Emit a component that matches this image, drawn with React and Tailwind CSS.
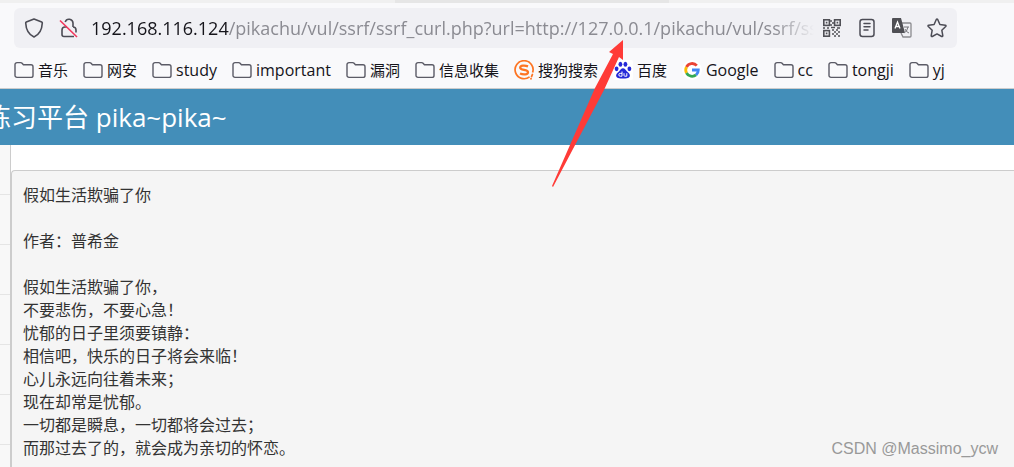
import React from 'react';

const FolderIcon = () => (
  <svg className="h-5 w-5 shrink-0" viewBox="0 0 20 20" fill="none" stroke="#5b5b66" strokeWidth="1.4" strokeLinejoin="round">
    <path d="M1 4.6a2 2 0 0 1 2-2h3.6a2 2 0 0 1 1.5.7l1.3 1.5H17a2 2 0 0 1 2 2v8.6a2 2 0 0 1-2 2H3a2 2 0 0 1-2-2z" />
  </svg>
);

const SogouIcon = () => (
  <svg className="h-5 w-5 shrink-0" viewBox="0 0 20 20" fill="none" stroke="#fd7422">
    <path d="M15.6 16.8A9 9 0 1 1 18.6 12.6" strokeWidth="1.7" />
    <path d="M14 6.4C11 5.2 6.200 5.200 6.200 7.800c0 2.700 7.800 1.500 7.800 4.400 0 2.600-5 2.600-8 1.300" strokeWidth="2.300" />
    <path d="M18.400 14.500l-.8 2M17 18.600v.2" strokeWidth="1.800" strokeLinecap="round" />
  </svg>
);

const BaiduIcon = () => (
  <svg className="h-5 w-5 shrink-0" viewBox="0 0 20 20" fill="#2529d8">
    <rect width="20" height="20" rx="2" fill="#fff" />
    <ellipse cx="3.6" cy="8.8" rx="1.9" ry="2.4" />
    <ellipse cx="7.4" cy="4.2" rx="1.9" ry="2.5" />
    <ellipse cx="12.4" cy="4.2" rx="1.9" ry="2.5" />
    <ellipse cx="16.4" cy="8.800" rx="1.9" ry="2.4" />
    <path d="M10 8.2c1.8 0 2.5 1.8 4 3.2 2.2 1.8 3.6 3.4 2.6 5.4-1 2-3.6 1.6-6.6 1.6s-5.6.4-6.6-1.600c-1-2 .4-3.600 2.600-5.400 1.500-1.400 2.200-3.200 4-3.200z" />
    <path d="M9 11.500v4.700H7.200a1.300 1.300 0 0 1 0-2.800H9M11 13.200v2.200q0 .8.8.8h2v-3" fill="none" stroke="#fff" />
  </svg>
);

const GoogleIcon = () => (
  <svg className="h-5 w-5 shrink-0" viewBox="0 0 20 20" fill="none" strokeWidth="2.800">
    <circle cx="10" cy="10" r="10" fill="#fff" />
    <path d="M14.800 5.600A6.300 6.300 0 0 0 4.500 7" stroke="#ea4335" />
    <path d="M4.500 7a6.300 6.300 0 0 0 0 6" stroke="#fbbc05" />
    <path d="M4.500 13a6.300 6.300 0 0 0 9.600 1.900" stroke="#34a853" />
    <path d="M14.100 14.900A6.300 6.300 0 0 0 16.300 10H10" stroke="#4285f4" />
  </svg>
);

const ShieldIcon = () => (
  <svg className="h-5 w-5 shrink-0" viewBox="0 0 20 20" fill="none" stroke="#4c4c55" strokeWidth="1.6" strokeLinejoin="round">
    <path d="M10 1L17.700 4a1 1 0 0 1 .6 1C18 11.500 15.500 16.500 10 19 4.500 16.500 2 11.500 1.700 5a1 1 0 0 1 .6-1z" />
  </svg>
);

const InsecureIcon = () => (
  <svg className="h-5 w-5 shrink-0" viewBox="0 0 20 20" fill="none" stroke="#4c4c55" strokeWidth="1.6">
    <path d="M6.200 4a4 4 0 0 1 7.800 1v4M14 9a3 3 0 0 1 3 3v2.500M6 9a3 3 0 0 0-3 3v4.500a2 2 0 0 0 2 2h10M6 9h2" />
    <path d="M1 2.500l17 16.500" stroke="#f2355b" strokeWidth="1.600" />
  </svg>
);

const QrIcon = () => (
  <svg className="h-5 w-5" viewBox="0 0 20 20" fill="none" stroke="#505056" strokeWidth="1.600">
    <rect x="1.800" y="1.800" width="5.600" height="5.600" />
    <rect x="12.600" y="1.800" width="5.600" height="5.600" />
    <rect x="1.800" y="12.600" width="5.600" height="5.600" />
    <path d="M3.800 4.600h1.600M14.600 4.600h1.600M3.800 15.400h1.600M8 3h2M10 5h2M8 7h2M1 10h2M5 10h2M9 9.500h4M15 10h3M10 12h2M14 12h2M12 14h2M16 14h2M10 16h2M14 16h2M12 18h2M16 18h2" />
  </svg>
);

const ReaderIcon = () => (
  <svg className="h-5 w-5" viewBox="0 0 20 20" fill="none" stroke="#4c4c55" strokeWidth="1.5" strokeLinecap="round">
    <rect x="3" y="1.5" width="14" height="17" rx="2.5" />
    <path d="M7 5.500h6M7 8.800h6M7 12h4" />
  </svg>
);

const TranslateIcon = () => (
  <svg className="h-5 w-5" viewBox="0 0 20 20" fill="none">
    <path d="M10 5h8a1 1 0 0 1 1 1v12a1 1 0 0 1-1 1h-7l-2-4" stroke="#8a8a8e" strokeWidth="1.3" />
    <path d="M1 0h8l4 15H1a1 1 0 0 1-1-1V1a1 1 0 0 1 1-1z" fill="#4f4f54" />
    <path d="M3 10.500L5.500 4 8 10.500M4 8.500h3" stroke="#fff" strokeWidth="1.300" />
    <path d="M12 9h5M16 9q-1 5-4 6M13 11q1 3 4 4" stroke="#77777c" />
  </svg>
);

const StarIcon = () => (
  <svg className="h-5 w-5" viewBox="0 0 20 20" fill="none" stroke="#4c4c55" strokeWidth="1.5" strokeLinejoin="round">
    <path d="M9.300 1.500q.7-1 1.400 0l2.200 5 5.400.7q1.200.3.4 1.300l-3.900 3.700 1 5.500q0 1.200-1.100.8L10 15.900l-4.700 2.600q-1.100.4-1.100-.8l1-5.500-3.900-3.700q-.8-1 .4-1.300l5.400-.7z" />
  </svg>
);

const bookmarks = [
  { label: '音乐', icon: FolderIcon, size: 'text-[15px]' },
  { label: '网安', icon: FolderIcon, size: 'text-[15px]' },
  { label: 'study', icon: FolderIcon, size: 'text-base' },
  { label: 'important', icon: FolderIcon, size: 'text-base' },
  { label: '漏洞', icon: FolderIcon, size: 'text-[15px]' },
  { label: '信息收集', icon: FolderIcon, size: 'text-[15px]' },
  { label: '搜狗搜索', icon: SogouIcon, size: 'text-[15px]' },
  { label: '百度', icon: BaiduIcon, size: 'text-[15px]' },
  { label: 'Google', icon: GoogleIcon, size: 'text-base' },
  { label: 'cc', icon: FolderIcon, size: 'text-base' },
  { label: 'tongji', icon: FolderIcon, size: 'text-base' },
  { label: 'yj', icon: FolderIcon, size: 'text-base' },
];

const actions = [
  { label: 'QR code', icon: QrIcon },
  { label: 'Reader view', icon: ReaderIcon },
  { label: 'Translate', icon: TranslateIcon },
  { label: 'Bookmark', icon: StarIcon },
];

const poem = `假如生活欺骗了你

作者：普希金

假如生活欺骗了你，
不要悲伤，不要心急！
忧郁的日子里须要镇静：
相信吧，快乐的日子将会来临！
心儿永远向往着未来；
现在却常是忧郁。
一切都是瞬息，一切都将会过去；
而那过去了的，就会成为亲切的怀恋。`;

const AddressBar = () => (
  <div className="ml-3.5 mr-[57px] flex h-10 items-center rounded-md bg-[#f0f0f4] px-2.5">
    <button aria-label="Site protection"><ShieldIcon /></button>
    <button aria-label="Connection not secure" className="ml-[15px]"><InsecureIcon /></button>
    <div className="ml-3 min-w-0 flex-1 overflow-hidden whitespace-nowrap text-lg text-[#8b8b92] [mask-image:linear-gradient(to_right,black_calc(100%-40px),transparent)]">
      <span className="text-[#15141a]">192.168.116.124</span>
      /pikachu/vul/ssrf/ssrf_curl.php?url=http://127.0.0.1/pikachu/vul/ssrf/ssr
    </div>
    <div className="ml-2 flex gap-[15px]">
      {actions.map(({ label, icon: Icon }) => (
        <button key={label} aria-label={label}><Icon /></button>
      ))}
    </div>
  </div>
);

const App = () => {
  return (
    <div className="relative flex h-screen flex-col overflow-hidden bg-white font-['Open_Sans','Noto_Sans_CJK_SC',sans-serif]">
      <header className="shrink-0 border-b border-[#cccccc] bg-[#f9f9fb]">
        <div className="mb-[5px] flex h-[3px] bg-[#f0f0f0]">
          <div className="ml-[39%] w-[27%] bg-[#e6e6e6]" />
        </div>
        <AddressBar />
        <nav className="flex h-10 items-center gap-[15px] whitespace-nowrap px-3.5 pt-1 text-[#15141a]">
          {bookmarks.map(({ label, icon: Icon, size }) => (
            <a key={label} href="#" className={`flex items-center gap-1 ${size}`}>
              <Icon />
              {label}
            </a>
          ))}
        </nav>
      </header>

      <div className="flex h-14 shrink-0 items-center overflow-hidden whitespace-nowrap bg-[#438eb9] text-[26px] text-white">
        <h1 className="-ml-[15px]">练习平台 pika~pika~</h1>
      </div>

      <div className="flex min-h-0 flex-1">
        <aside className="w-[11px] shrink-0 border-r border-[#cccccc] bg-[#f8f8f8]">
          {[1, 2, 3, 4, 5, 6].map((item) => (
            <div key={item} className="h-[50px] border-b border-[#e5e5e5]" />
          ))}
        </aside>
        <main className="min-w-0 flex-1 pt-[25px]">
          <pre className="h-full rounded-tl-sm border-l border-t border-[#cccccc] bg-[#f5f5f5] px-[11px] py-3 font-['Noto_Sans_CJK_SC',sans-serif] text-base leading-[23px] text-[#333333]">
            {poem}
          </pre>
        </main>
      </div>

      <svg className="pointer-events-none absolute left-[550px] top-10 h-[150px] w-[76px]" viewBox="0 0 76 150" fill="#ff3b37">
        <path d="M73 0L59 12l4 2-18 34L2 146l1 1L54 50l15-33 4 3z" />
      </svg>
      <span className="absolute bottom-1.5 right-4 font-['Liberation_Sans',sans-serif] text-base text-[#999999]">CSDN @Massimo_ycw</span>
    </div>
  );
};

export default App;
